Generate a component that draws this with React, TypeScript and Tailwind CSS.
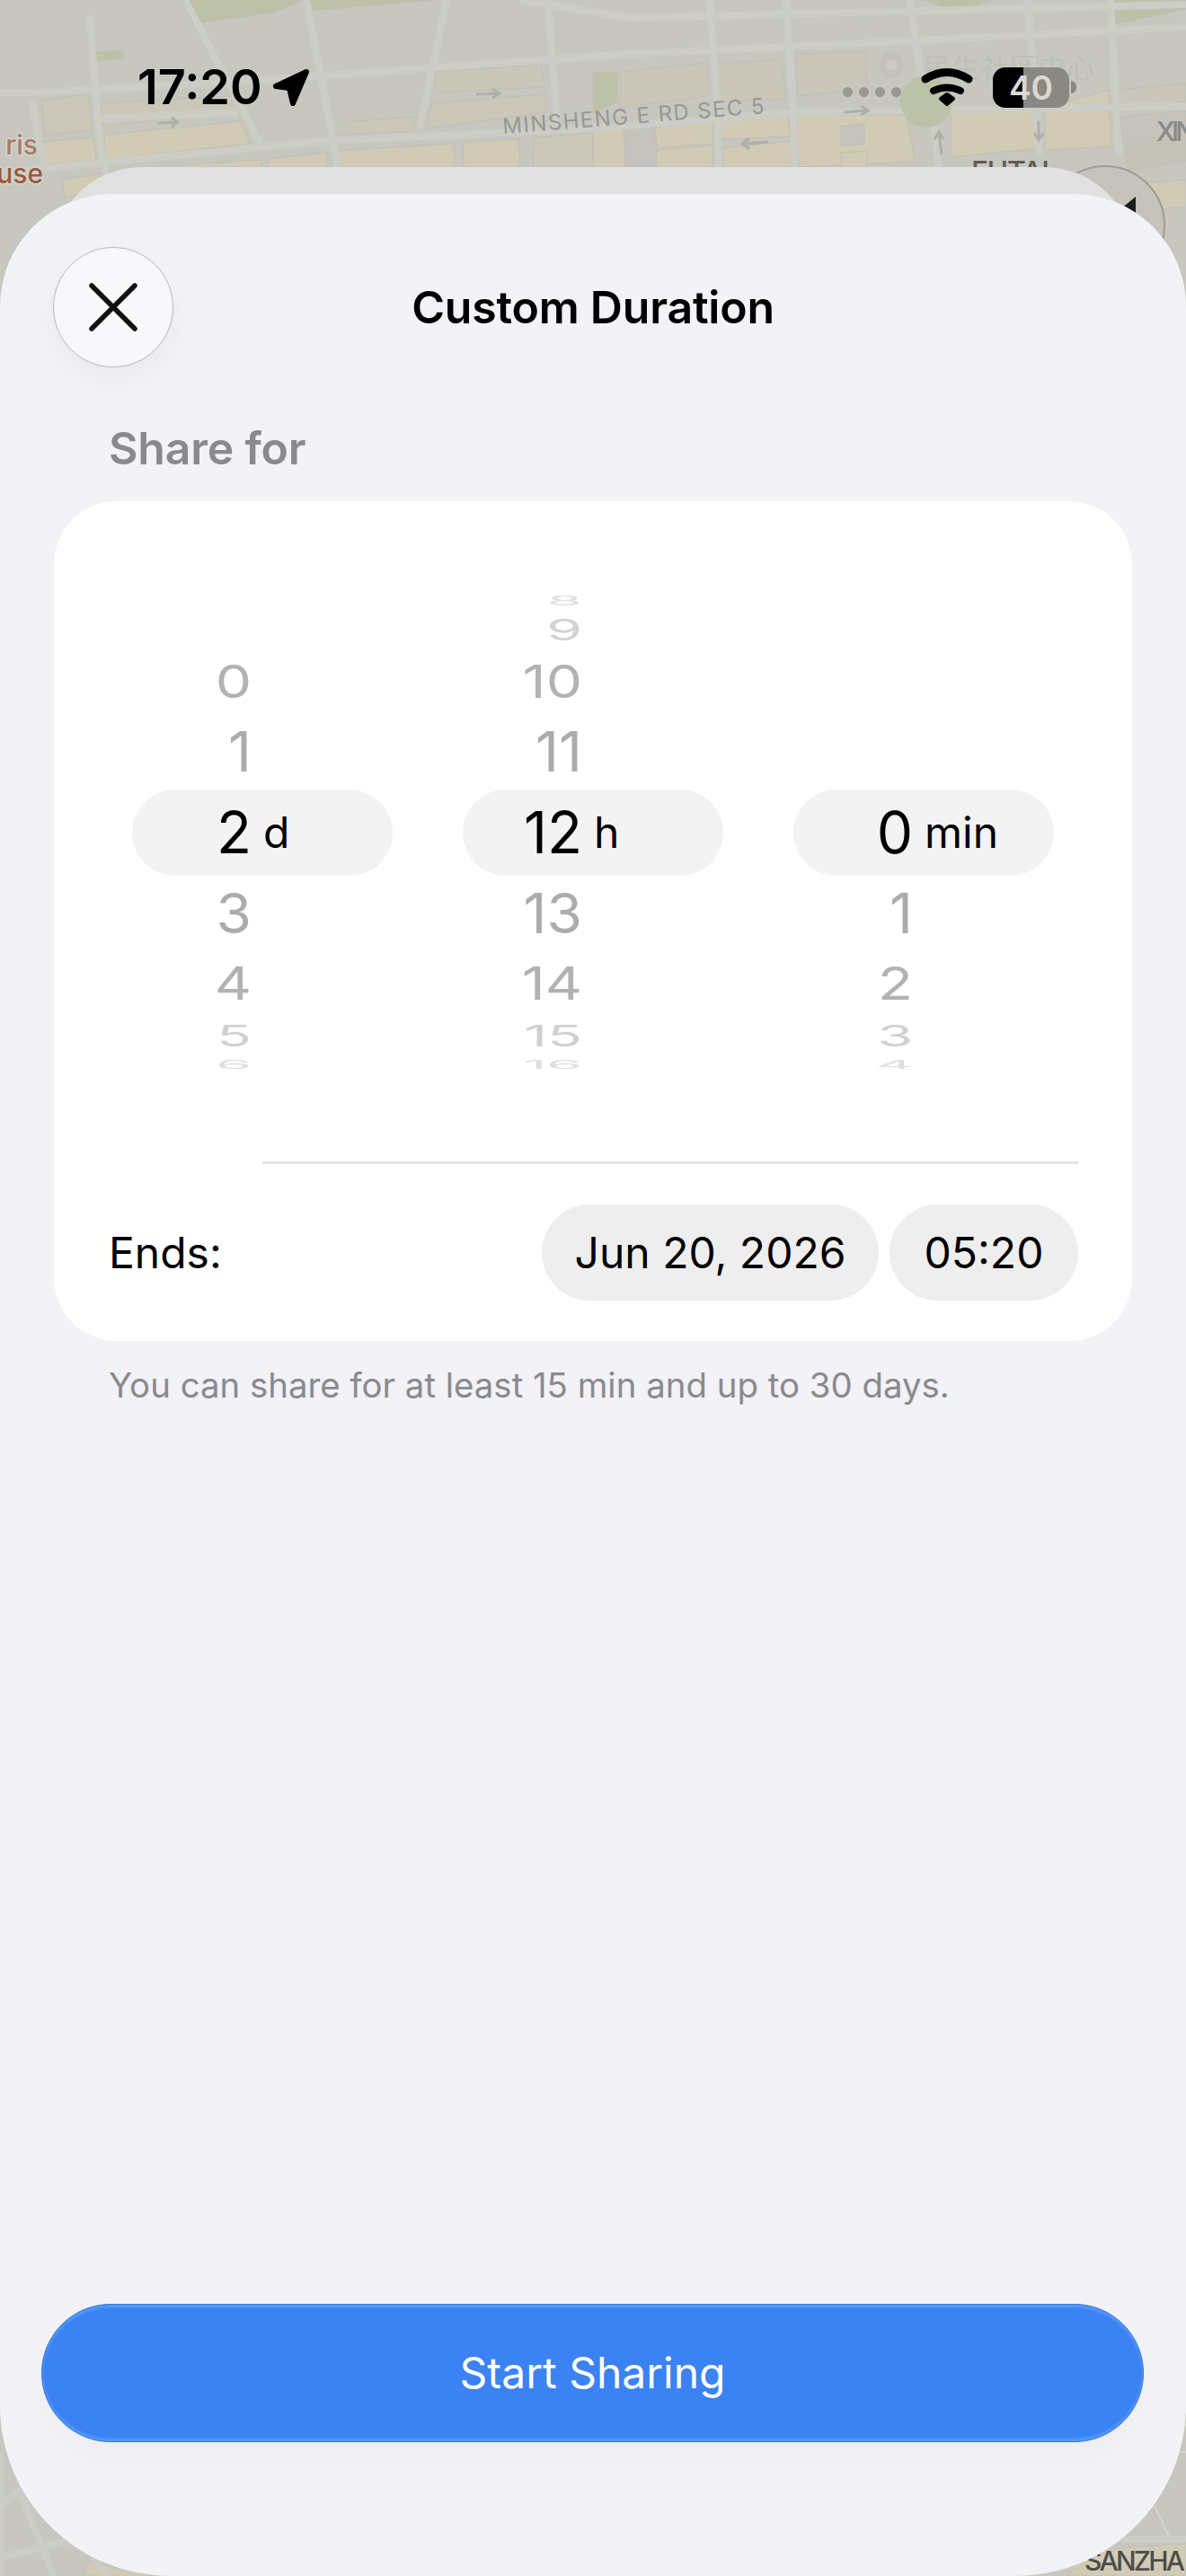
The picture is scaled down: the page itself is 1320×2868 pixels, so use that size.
import React from "react";

const tan = "#d1cbb6";
const tanLight = "#cbc8b9";
const green = "#bcc2a8";
const gray = "#c4c3bd";

const mapBlocks: [string, string][] = [
  ["48,158 103,153 107,178 50,183", tan],
  ["116,150 269,135 278,160 118,177", tan],
  ["112,115 257,107 259,125 114,140", tanLight],
  ["47,112 98,105 103,145 49,150", tanLight],
  ["299,177 364,170 364,186 299,186", tan],
  ["375,168 505,160 505,186 375,186", tan],
  ["516,158 577,155 579,186 516,186", tan],
  ["595,153 660,148 660,186 593,186", tanLight],
  ["210,183 290,178 292,186 210,186", tan],
  ["70,200 135,190 85,217 72,220", tan],
  ["480,115 606,105 608,125 475,143", tanLight],
  ["484,80 602,72 606,97 484,103", "#c9c7ba"],
  ["393,135 462,130 460,146 375,150", tanLight],
  ["660,147 694,143 696,186 660,186", tan],
  ["696,143 729,142 729,186 698,186", gray],
  ["729,142 793,135 793,160 731,165", tan],
  ["731,167 793,162 793,186 731,186", tan],
  ["803,132 877,128 879,152 803,155", tan],
  ["803,165 881,157 881,186 805,186", tan],
  ["887,128 1009,128 1018,180 889,186", tan],
  ["936,170 965,168 965,186 936,186", tan],
  ["936,140 962,138 962,160 936,163", gray],
  ["1058,122 1155,118 1155,165 1058,175", tan],
  ["1163,120 1234,100 1236,163 1163,167", tan],
  ["799,70 870,67 875,110 799,113", "#cac7ba"],
  ["887,60 963,57 965,100 887,107", "#cac7ba"],
  ["690,80 786,70 788,107 690,120", "#cac7ba"],
  ["1247,130 1320,123 1320,150 1247,158", gray],
  ["1243,100 1320,93 1320,113 1245,120", "#cac7ba"],
  ["1252,160 1320,152 1320,180 1255,190", "#c5c3b8"],
  ["1265,205 1320,200 1320,230 1270,235", tan],
  ["660,80 687,80 687,113 660,127", green],
  ["202,0 337,0 307,13 215,27", green],
  ["345,0 484,0 345,12", green],
  ["1030,0 1106,0 1064,13", green],
  ["1237,0 1320,0 1320,10 1241,27", green],
  ["104,58 137,57 137,65 105,68", green],
  ["1204,2840 1320,2832 1320,2868 1190,2868", tan],
  ["100,2852 170,2868 92,2868", tan],
];

const mapRoads = [
  "M0,192 L362,157 L660,143 L887,125 L1320,118",
  "M0,103 L40,103 L250,92 L475,76 L700,60 L880,52 L1320,30",
  "M112,132 L265,125",
  "M100,17 L110,150 L118,200",
  "M35,110 L50,190",
  "M206,0 L290,160",
  "M341,0 L370,153 L375,186",
  "M497,0 L467,143",
  "M610,0 L620,140",
  "M790,0 L799,133 L800,186",
  "M875,0 L883,130 L885,186",
  "M1013,0 L1026,97",
  "M1040,140 L1044,186",
  "M1144,0 L1157,173",
  "M1236,0 L1245,173",
  "M580,0 L700,20 L1320,5",
  "M0,2730 L0,2868",
  "M0,2790 L36,2762",
  "M0,2848 L110,2820",
  "M20,2770 L60,2868",
  "M70,2800 L120,2868",
  "M1150,2827 L1320,2827",
];

function MapBackdrop() {
  return (
    <svg className="absolute inset-0" width="1320" height="2868" viewBox="0 0 1320 2868">
      {mapBlocks.map(([points, fill]) => (
        <polygon key={points} points={points} fill={fill} stroke="#c0bfb6" strokeWidth="1" />
      ))}
      {mapRoads.map((d) => (
        <path key={d} d={d} fill="none" stroke="#cdcdc8" strokeWidth="8" />
      ))}
      <path d="M1287,2700 L1320,2700 M1295,2730 L1320,2730 M1285,2790 L1302,2826" stroke="#d3d3ce" strokeWidth="2" fill="none" />
      <circle cx="1031" cy="113" r="29" fill={green} />
      <circle cx="992" cy="72" r="14" fill="#c2c1ba" />
      <circle cx="992" cy="72" r="6" fill="#cbcac4" />
      <g fill="none" stroke="#b0b0aa" strokeWidth="3">
        <path d="M175,137 L198,136 M191,131 L198,136 L191,141" />
        <path d="M530,105 L555,104 M548,99 L556,104 L548,109" />
        <path d="M940,125 L965,123 M958,118 L966,123 L958,128" />
        <path d="M855,158 L827,160 M834,154 L826,160 L834,166" />
        <path d="M1048,172 L1045,148 M1040,155 L1045,147 L1050,155" />
        <path d="M1156,135 L1156,155 M1151,148 L1156,156 L1161,148" />
      </g>
      <g fontFamily="Inter, sans-serif">
        <text x="42" y="172" textAnchor="end" fontSize="30" fontWeight="500" fill="#a87b66" stroke="#d5d4ce" strokeWidth="3" paintOrder="stroke">ris</text>
        <text x="48" y="204" textAnchor="end" fontSize="30" fontWeight="500" fill="#995a38" stroke="#d5d4ce" strokeWidth="3" paintOrder="stroke">use</text>
        <text x="560" y="149" transform="rotate(-4.5 560 149)" fontSize="24" textLength="292" fill="#999893">MINSHENG E RD SEC 5</text>
        <text x="1081" y="203" fontSize="32" fontWeight="500" textLength="87" fill="#5e5d58">FUTAI</text>
        <text x="1287" y="157" fontSize="30" fontWeight="500" textLength="44" fill="#8b8a85">XIN</text>
        <text x="1207" y="2862" fontSize="30" fontWeight="500" textLength="112" fill="#4e4e4a">SANZHA</text>
        <text x="1028" y="86" fontSize="30" textLength="190" fill="#bfbeb7" fontFamily="'Noto Sans CJK TC', sans-serif">民生社區中心</text>
      </g>
      <circle cx="1230" cy="251" r="66" fill="#c5c3bb" stroke="#a09c92" strokeWidth="2" />
      <path d="M1264,219 L1264,240 L1248,232 Z" fill="#1c1c1a" />
    </svg>
  );
}

function LocationArrow() {
  return (
    <svg width="46" height="46" viewBox="0 0 46 46" className="ml-[9px]">
      <path d="M40,6 L6,22 L21,24 L25,41 Z" fill="#000" stroke="#000" strokeWidth="6" strokeLinejoin="round" />
    </svg>
  );
}

function Wifi() {
  return (
    <svg width="60" height="46" viewBox="0 0 60 46">
      <path d="M6,14 Q30,-1 54,14" fill="none" stroke="#000" strokeWidth="9" strokeLinecap="round" />
      <path d="M15,27 Q30,20 45,27" fill="none" stroke="#000" strokeWidth="8" strokeLinecap="round" />
      <path d="M30,31 L37,36 L30,42 L23,36 Z" fill="#000" stroke="#000" strokeWidth="4" strokeLinejoin="round" />
    </svg>
  );
}

function StatusBar() {
  return (
    <div className="relative flex h-[186px] items-start pl-[153px] pr-[122px] pt-[72px]">
      <div className="flex h-[50px] items-center">
        <span className="text-[54px] font-semibold leading-none text-black">17:20</span>
        <LocationArrow />
      </div>
      <div className="ml-auto flex h-[50px] items-center">
        <div className="mr-[21px] mt-[10px] flex gap-[7px]">
          <span className="h-[11px] w-[11px] rounded-full bg-[#9a9892]" />
          <span className="h-[11px] w-[11px] rounded-full bg-[#9a9892]" />
          <span className="h-[11px] w-[11px] rounded-full bg-[#9a9892]" />
          <span className="h-[11px] w-[11px] rounded-full bg-[#9a9892]" />
        </div>
        <Wifi />
        <div className="ml-[21px] flex items-center">
          <div className="flex h-[45px] w-[85px] items-center justify-center rounded-[14px] bg-[linear-gradient(to_right,#000_40%,#8a8882_40%)] text-[37px] font-semibold leading-none text-[#dbd8d0]">
            40
          </div>
          <span className="ml-[2px] h-[14px] w-[6px] rounded-r-full bg-[#8a8882]" />
        </div>
      </div>
    </div>
  );
}

const rowStyles = [
  { h: "h-[32px]", t: "scale-y-[0.22] text-[#e0e0e0]" },
  { h: "h-[31px]", t: "scale-y-[0.5] text-[#d2d2d2]" },
  { h: "h-[86px]", t: "scale-y-[0.8] text-[#b2b2b2]" },
  { h: "h-[70px]", t: "scale-y-[0.97] text-[#acacac]" },
  null,
  { h: "h-[69px]", t: "scale-y-[0.97] text-[#acacac]" },
  { h: "h-[87px]", t: "scale-y-[0.8] text-[#b2b2b2]" },
  { h: "h-[29px]", t: "scale-y-[0.5] text-[#d0d0d0]" },
  { h: "h-[35px]", t: "scale-y-[0.2] text-[#dedede]" },
];

function Wheel({ values, unit }: { values: string[]; unit: string }) {
  return (
    <div className="flex w-[290px] flex-col">
      {rowStyles.map((row, i) =>
        row ? (
          <div key={i} className={`flex items-center ${row.h}`}>
            <span className={`block w-[133px] text-right text-[64px] leading-none ${row.t}`}>{values[i]}</span>
          </div>
        ) : (
          <div key={i} className="flex h-[110px] items-center">
            <div className="flex h-[96px] w-full items-center rounded-full bg-[#f3f3f3] text-black">
              <span className="block w-[133px] text-right text-[64px] leading-none">{values[i]}</span>
              <span className="ml-[13px] text-[48px] leading-none">{unit}</span>
            </div>
          </div>
        )
      )}
    </div>
  );
}

export default function App() {
  return (
    <div className="relative flex h-[2868px] w-[1320px] flex-col overflow-hidden bg-[#c7c7c0] font-['Inter',sans-serif]">
      <MapBackdrop />
      <StatusBar />
      <div className="relative mx-[58px] -mb-[100px] h-[130px] shrink-0 rounded-t-[100px] bg-[#e1e1e1]" />
      <div className="relative flex flex-1 flex-col rounded-t-[125px] rounded-b-[190px] bg-[#f2f2f7]">
        <div className="grid grid-cols-[1fr_auto_1fr] items-center pl-[59px] pt-[59px]">
          <button className="flex h-[134px] w-[134px] items-center justify-center rounded-full border-[1.5px] border-[#b9b9bb] bg-[#f8f8fb] shadow-[0_14px_30px_rgba(0,0,0,0.04)]">
            <svg width="54" height="54" viewBox="0 0 54 54">
              <path d="M3,3 L51,51 M51,3 L3,51" stroke="#111" strokeWidth="5.5" strokeLinecap="round" />
            </svg>
          </button>
          <h1 className="-ml-[59px] text-[50px] font-semibold leading-none tracking-[-0.2px] text-black">Custom Duration</h1>
          <div />
        </div>
        <div className="mt-[61px] pl-[121px] text-[50px] font-semibold leading-[58px] tracking-[-0.2px] text-[#8a8a8e]">Share for</div>
        <div className="mx-[60px] mt-[30px] flex flex-col rounded-[70px] bg-white pt-[95px]">
          <div className="flex gap-[78px] pl-[87px]">
            <Wheel values={["", "", "0", "1", "2", "3", "4", "5", "6"]} unit="d" />
            <Wheel values={["8", "9", "10", "11", "12", "13", "14", "15", "16"]} unit="h" />
            <Wheel values={["", "", "", "", "0", "1", "2", "3", "4"]} unit="min" />
          </div>
          <div className="ml-[232px] mr-[60px] mt-[91px] h-[3px] bg-[#e5e5e5]" />
          <div className="mt-[45px] flex items-center pb-[45px] pl-[61px] pr-[60px]">
            <span className="text-[48px] leading-none text-black">Ends:</span>
            <div className="ml-auto flex gap-[12px] text-[48px] leading-none text-black">
              <div className="flex h-[107px] w-[375px] items-center justify-center rounded-full bg-[#eeeeee]">Jun 20, 2026</div>
              <div className="flex h-[107px] w-[210px] items-center justify-center rounded-full bg-[#eeeeee]">05:20</div>
            </div>
          </div>
        </div>
        <p className="mt-[26px] pl-[121px] text-[38.4px] leading-[46px] text-[#8a8a8e]">You can share for at least 15 min and up to 30 days.</p>
        <div className="mb-[149px] ml-[46px] mr-[47px] mt-auto">
          <button className="flex h-[154px] w-full items-center justify-center rounded-full border-[1.5px] border-[#2f78dc] bg-[#3b82f3] text-[48px] font-normal leading-none text-white shadow-[inset_0_3px_3px_rgba(120,180,255,0.5),inset_0_-3px_3px_rgba(120,180,255,0.5),0_22px_30px_rgba(0,0,0,0.02)]">
            Start Sharing
          </button>
        </div>
      </div>
    </div>
  );
}
